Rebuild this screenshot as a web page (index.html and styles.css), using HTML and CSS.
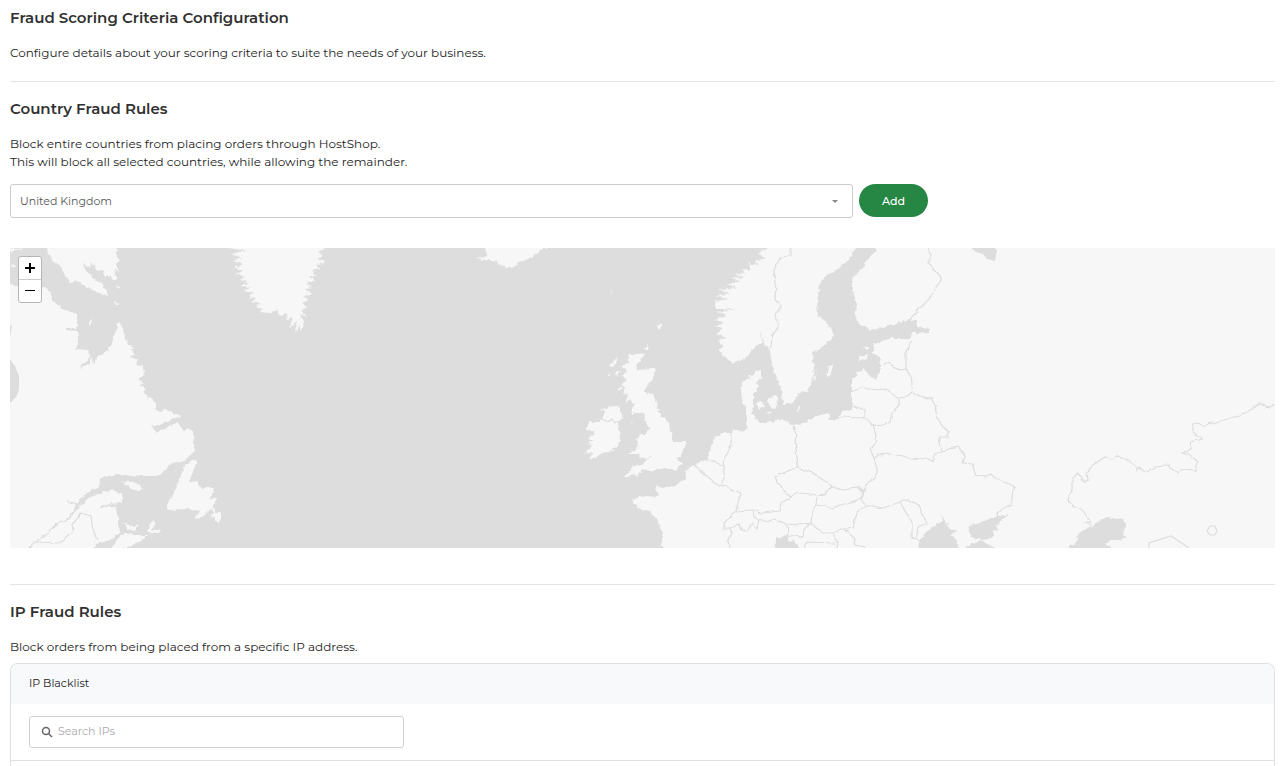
FILE: index.html
```html
<!DOCTYPE html>
<html lang="en">
<head>
<meta charset="utf-8">
<meta name="viewport" content="width=device-width, initial-scale=1">
<title>Fraud Scoring Criteria Configuration</title>
<link rel="stylesheet" href="styles.css">
</head>
<body>
<main class="page">
  <section class="section">
    <h1 class="heading">Fraud Scoring Criteria Configuration</h1>
    <p class="text">Configure details about your scoring criteria to suite the needs of your business.</p>
  </section>

  <section class="section section-ruled">
    <h2 class="heading">Country Fraud Rules</h2>
    <p class="text">Block entire countries from placing orders through HostShop.<br>This will block all selected countries, while allowing the remainder.</p>
    <form class="country-form">
      <div class="select-wrap">
        <select class="select" aria-label="Country"><option>United Kingdom</option></select>
      </div>
      <button class="add-button" type="button">Add</button>
    </form>

    <div class="map">
      <svg class="map-drawing" viewBox="10 248 1265 300" preserveAspectRatio="xMidYMid slice" role="img" aria-label="Country map">
        <defs>
          <filter id="coast" filterUnits="userSpaceOnUse" x="0" y="238" width="1285" height="320">
            <feTurbulence type="fractalNoise" baseFrequency="0.22" numOctaves="2" seed="4"/>
            <feDisplacementMap in="SourceGraphic" scale="5" xChannelSelector="R" yChannelSelector="G"/>
          </filter>
          <filter id="border" filterUnits="userSpaceOnUse" x="0" y="238" width="1285" height="320">
            <feTurbulence type="fractalNoise" baseFrequency="0.14" numOctaves="1" seed="9"/>
            <feDisplacementMap in="SourceGraphic" scale="5" xChannelSelector="R" yChannelSelector="G"/>
          </filter>
        </defs>

        <g class="land" filter="url(#coast)">
          <!-- Quebec and Labrador -->
          <path d="M0 283L10 284 18 287 42 286 50 292 53 300 60 308 72 312 77 315 77 328 66 328 66 330 77 331 79 343 74 350 80 349 87 350 89 354 88 361 80 366 81 368 90 363 92 355 94 366 96 358 108 350 113 340 117 327 120 321 123 330 127 342 133 347 131 350 136 353 130 357 138 360 136 364 142 365 145 375 138 380 146 383 139 385 146 389 143 392 155 402 155 410 161 411 167 410 174 413 181 416 163 423 152 427 157 433 164 429 178 422 183 430 188 427 194 433 193 443 195 451 185 460 172 463 160 475 148 476 137 476 115 475 103 476 99 482 98 488 87 492 77 503 66 500 76 506 68 518 55 524 46 534 37 540 26 549 0 560Z"/>
          <!-- Gaspe and the Maritimes -->
          <path d="M26 560L33 544 45 536 58 525 70 519 80 506 88 499 97 494 113 490 122 494 122 502 113 504 101 505 101 507 115 507 118 517 118 524 120 532 110 540 100 543 92 549 92 560Z"/>
          <path d="M112 548L117 540 123 533 133 535 148 535 140 542 127 548ZM148 532L151 524 154 519 155 525 151 530 160 530 157 534ZM122 521L128 526 138 526 135 531 128 529ZM122 481L135 482 145 490 133 490Z"/>
          <!-- Newfoundland -->
          <path d="M197 461L192 459 186 464 183 470 177 485 172 497 167 505 167 510 187 509 200 511 195 519 201 518 206 513 212 509 214 513 210 518 215 517 215 522 219 522 221 512 217 512 212 507 218 498 210 499 214 488 200 487 197 481 188 483 193 472Z"/>
          <!-- Baffin Island -->
          <path d="M46 238L46 248 50 258 60 267 67 278 70 283 78 281 87 288 100 293 107 296 107 290 97 280 88 273 83 263 90 268 91 262 98 271 103 270 106 277 110 276 112 279 117 279 114 270 118 272 116 264 119 260 115 253 118 250 115 238ZM10 247L23 250 16 251 10 252ZM11 264L17 267 12 267ZM114 301L119 303 118 306Z"/>
          <path d="M88 323L92 319 91 325ZM116 286L120 287 118 290Z"/>
          <!-- Greenland -->
          <path d="M229 238L229 248 246 251 231 254 243 258 233 260 244 264 234 268 243 271 236 274 246 276 240 280 248 282 242 286 251 287 243 291 254 293 249 297 258 298 251 301 260 303 257 307 263 309 260 312 269 313 279 309 279 315 287 313 286 320 293 318 289 328 297 322 295 333 300 324 300 333 304 322 299 315 306 316 301 309 308 308 302 303 308 300 303 296 310 295 306 289 312 287 305 282 314 281 310 276 317 276 312 271 320 269 316 264 325 263 318 257 323 255 318 252 326 248 326 238Z"/>
          <!-- Iceland -->
          <path d="M484 238L485 248 487 255 478 259 495 261 500 265 512 268 518 263 533 257 540 250 548 247 548 238Z"/>
          <!-- Ireland and Great Britain -->
          <path d="M605 412L600 410 606 408 612 406 620 408 623 418 618 423 620 440 617 448 603 453 592 459 588 458 593 453 584 454 593 445 587 444 594 440 587 438 595 433 587 429 588 422 600 422Z"/>
          <path d="M630 355L645 353 643 358 636 365 637 369 655 368 653 380 643 392 653 394 657 402 659 413 670 423 671 431 673 442 685 442 686 447 681 455 676 459 683 463 677 469 660 469 650 471 642 470 638 477 633 475 624 478 633 466 642 464 651 457 642 459 637 454 628 454 638 448 639 442 635 440 641 434 647 434 649 428 647 423 645 418 644 413 638 413 631 413 634 405 630 399 626 403 628 392 624 396 625 387 621 385 627 379 622 376 627 371 622 367 628 362Z"/>
          <path d="M611 364L618 357 616 364 612 367ZM614 372L620 371 617 377ZM631 422L634 419 632 424ZM643 349L648 345 648 349ZM657 326L662 323 660 330ZM610 290L613 292 612 294ZM619 387L622 389 618 391ZM609 374L611 373 609 380Z"/>
          <!-- Norway and Sweden -->
          <path d="M766 238L768 248 757 253 766 258 755 261 758 265 749 263 751 270 741 269 745 274 735 273 744 278 731 277 742 283 726 283 736 288 718 289 729 294 716 296 729 299 715 301 716 309 736 309 716 312 727 315 715 320 725 323 715 326 722 329 716 334 727 338 717 341 724 346 719 350 723 356 733 363 741 361 747 357 752 350 758 345 762 342 760 332 764 342 768 347 770 356 772 363 776 376 781 387 783 404 793 403 800 393 807 391 812 383 814 367 812 353 823 348 834 334 825 320 818 317 817 303 820 283 824 277 837 270 850 258 855 248 855 238Z"/>
          <!-- Continental Europe -->
          <path d="M662 560L662 530 655 517 649 511 638 508 632 499 645 496 659 497 655 485 662 488 673 487 685 478 687 468 693 466 707 459 713 440 722 433 732 433 733 429 743 432 747 427 747 410 742 400 741 390 742 383 750 376 760 370 760 378 755 385 760 386 753 394 753 410 751 414 760 423 773 422 782 419 792 425 803 423 815 417 828 413 830 419 838 419 842 412 852 411 852 382 857 373 863 368 868 373 875 380 880 373 880 357 873 355 873 345 890 338 910 338 912 333 918 333 929 332 929 329 917 327 917 320 907 320 897 323 882 328 870 330 862 325 855 320 856 303 852 287 852 278 863 268 870 257 877 248 877 238 1290 238 1290 560Z"/>
          <path d="M756 402L761 401 764 406 759 410ZM768 399L775 395 778 400 775 409 770 408ZM766 411L772 412 769 415ZM797 406L801 408 798 410ZM827 375L829 366 833 366 829 378ZM859 357L868 354 866 359 860 361ZM863 348L868 347 867 351ZM814 378L817 371 815 382Z"/>
        </g>

        <g class="sea">
          <path d="M0 350L10 359 15 366 19 376 19 390 16 397 10 403 0 408ZM8 323L12 326 10 337Z"/>
          <path d="M970 247L976 252 983 254 987 259 995 261 997 250 990 244Z"/>
        </g>
        <g class="sea" filter="url(#coast)">
          <path d="M775 560L776 537 782 537 787 534 790 542 794 540 799 548 800 560Z"/>
          <path d="M917 560L920 542 925 533 938 523 943 522 942 514 945 522 950 523 945 526 958 531 952 534 958 543 959 560ZM968 527L987 520 998 516 1008 515 1000 522 995 525 1000 530 993 531 993 538 983 540 972 538ZM963 550L970 544 983 541 995 548 998 560 963 560Z"/>
          <path d="M1068 560L1070 547 1078 540 1077 534 1092 526 1107 517 1123 520 1125 525 1123 535 1127 539 1112 540 1106 543 1112 550 1112 560Z"/>
        </g>

        <g class="borders" filter="url(#border)">
          <path d="M33 542L61 543 66 537 72 532 73 525 80 513 91 516 93 532 98 541"/>
          <path d="M603 413L602 419 608 422 612 419 615 423 620 422"/>
          <path d="M791 248L791 256 780 257 774 270 776 282 775 300 782 307 776 313 778 328 772 335 771 348M928 248L932 255 928 263 941 278 930 298 909 320M912 340L906 352 906 368 910 377 912 392M880 365L888 363 900 370 906 369"/>
          <path d="M852 392L860 388 880 390 885 388 889 392 898 398 908 397 912 393 920 396 930 397 935 405 937 417 943 427 950 432 947 437 939 437 942 452 935 453 932 462 927 459 908 458 903 456 890 454 878 455 874 459M923 395L927 399 933 398M899 398L899 405 892 413 890 421 882 425 873 426 865 418 838 417M853 405L858 408 865 410 865 418"/>
          <path d="M872 423L876 435 875 443 870 449 874 458 877 468 877 473 867 485 864 492 861 500 867 505 883 508 900 502 908 500 920 507 922 515 927 525 920 525 915 537M942 452L947 449 960 447 965 457 963 463 972 464 975 474 985 477 991 474 995 478 1014 486 1012 495 1012 505 1003 508 997 513 998 517M900 502L912 523 912 537 920 542"/>
          <path d="M793 427L797 435 795 440 797 457 798 467 812 473 820 478 832 486 843 489 858 487 864 492M867 506L857 513 853 527 843 529 833 533 823 533 812 523M861 499L850 502 832 508 817 505M833 533L837 542 836 548M845 529L853 537 855 545 865 547M805 548L807 542 835 543"/>
          <path d="M732 433L732 445 724 457 723 468 725 478 722 486 727 487 741 493 736 510 725 522 723 528 730 528 732 533 728 542 731 548M693 465L703 473 713 481 720 485 727 487M700 461L712 461 722 466M736 511L752 510 762 513 780 511 782 503 790 497 780 486 775 477 788 471 798 467M832 486L824 494 817 495 800 493 790 497M817 497L816 505 812 512 811 523 800 525 787 524 775 520 760 521 753 517 752 510M730 528L740 525 742 530 747 532 752 523 757 529 760 521M787 525L788 535 802 537 803 530 811 523"/>
          <path d="M1092 526L1085 523 1090 522 1082 509 1074 508 1068 500 1072 490 1072 482 1077 473 1084 482 1088 480 1087 472 1093 465 1105 457 1112 460 1117 457 1127 459 1137 468 1137 472 1139 467 1146 473 1155 466 1168 465 1173 470 1179 473 1183 469 1195 470 1197 462 1190 456 1183 453 1192 448 1190 442 1202 439 1193 433 1193 424 1205 425 1227 419 1253 410 1258 404 1270 407 1277 404"/>
        </g>
        <path class="borders" d="M1149 549V543L1171 536 1189 548M1210 526L1215 526 1217 531 1215 535 1210 535 1207 531Z"/>
      </svg>
      <div class="zoom-control">
        <button class="zoom-button" type="button" aria-label="Zoom in"><svg class="zoom-icon" viewBox="0 0 12 12"><path d="M1 6H11M6 1V11"/></svg></button>
        <button class="zoom-button" type="button" aria-label="Zoom out"><svg class="zoom-icon zoom-icon-thin" viewBox="0 0 12 12"><path d="M1 5.5H11"/></svg></button>
      </div>
    </div>
  </section>

  <section class="section section-ruled section-fill">
    <h2 class="heading">IP Fraud Rules</h2>
    <p class="text">Block orders from being placed from a specific IP address.</p>
    <div class="panel">
      <h3 class="panel-title">IP Blacklist</h3>
      <div class="panel-tools">
        <label class="search">
          <svg class="search-icon" viewBox="0 0 12 12" aria-hidden="true"><circle cx="5" cy="5" r="3.5"/><path d="M7.5 7.5L11 11"/></svg>
          <input class="search-input" type="search" placeholder="Search IPs" aria-label="Search IPs">
        </label>
      </div>
    </div>
  </section>
</main>
</body>
</html>
```
FILE: styles.css
```css
* { box-sizing: border-box; }

body {
  margin: 0;
  background: #fff;
  color: #222;
  font-family: Montserrat, Inter, "Open Sans", sans-serif;
  font-size: 12px;
  line-height: 18px;
}

button, input, select { font: inherit; }

.page {
  display: flex;
  flex-direction: column;
  min-height: 100vh;
  padding: 8px 12px 0 10px;
}

.section-ruled {
  border-top: 1px solid #e3e4e6;
  padding-top: 17px;
}

.section-fill {
  display: flex;
  flex: 1;
  flex-direction: column;
}

.heading {
  margin: 0 0 16px;
  color: #303030;
  font-size: 15px;
  font-weight: 600;
  line-height: 20px;
}

.text { margin: 0; }

.section:first-child .text { margin-bottom: 19px; }

.country-form {
  display: flex;
  align-items: flex-start;
  gap: 6px;
  margin-top: 13px;
}

.select-wrap {
  position: relative;
  width: 66.64%;
}

.select-wrap::after {
  content: "";
  position: absolute;
  top: 16px;
  right: 15px;
  border: 3px solid transparent;
  border-top-color: #888;
  border-bottom: 0;
  pointer-events: none;
}

.select {
  display: block;
  width: 100%;
  height: 34px;
  padding: 0 9px;
  appearance: none;
  border: 1px solid #ccc;
  border-radius: 3px;
  background: #fff;
  color: #555;
  font-size: 11px;
}

.add-button {
  height: 33px;
  padding: 0 23px;
  border: 0;
  border-radius: 17px;
  background: #268744;
  color: #fff;
  font-size: 11px;
  font-weight: 500;
}

.map {
  position: relative;
  height: 300px;
  margin: 30px 0 36px;
  overflow: hidden;
  background: #ddd;
}

.map-drawing {
  display: block;
  width: 100%;
  height: 100%;
}

.land { fill: #f7f7f7; }
.sea { fill: #ddd; }
.borders { fill: none; stroke: #ddd; stroke-width: 1.2; }

.zoom-control {
  position: absolute;
  top: 8px;
  left: 8px;
  width: 24px;
  border: 1px solid #b5b5b5;
  border-radius: 3px;
  background: #fff;
}

.zoom-button {
  display: flex;
  align-items: center;
  justify-content: center;
  width: 100%;
  height: 22px;
  padding: 0;
  border: 0;
  background: none;
}

.zoom-button + .zoom-button {
  height: 23px;
  border-top: 1px solid #ccc;
}

.zoom-icon {
  width: 12px;
  height: 12px;
  fill: none;
  stroke: #000;
  stroke-width: 2;
}

.zoom-icon-thin { stroke-width: 1; }

.panel {
  flex: 1;
  margin-top: 7px;
  border: 1px solid #dee0e3;
  border-bottom: 0;
  border-radius: 8px 8px 0 0;
  overflow: hidden;
}

.panel-title {
  margin: 0;
  padding: 10px 18px 12px;
  background: #f8f9fb;
  font-size: 11px;
  font-weight: 400;
}

.panel-tools {
  padding: 12px 18px;
  border-bottom: 1px solid #dee0e3;
}

.search {
  display: flex;
  align-items: center;
  gap: 5px;
  width: 375px;
  max-width: 100%;
  height: 32px;
  padding: 0 11px;
  border: 1px solid #d0d1d3;
  border-radius: 3px;
}

.search-icon {
  flex: none;
  width: 12px;
  height: 12px;
  fill: none;
  stroke: #666;
  stroke-width: 1.5;
}

.search-input {
  flex: 1;
  min-width: 0;
  padding: 0 0 2px;
  border: 0;
  outline: 0;
  background: none;
  font-size: 11px;
}

.search-input::placeholder { color: #aaa; }
```
